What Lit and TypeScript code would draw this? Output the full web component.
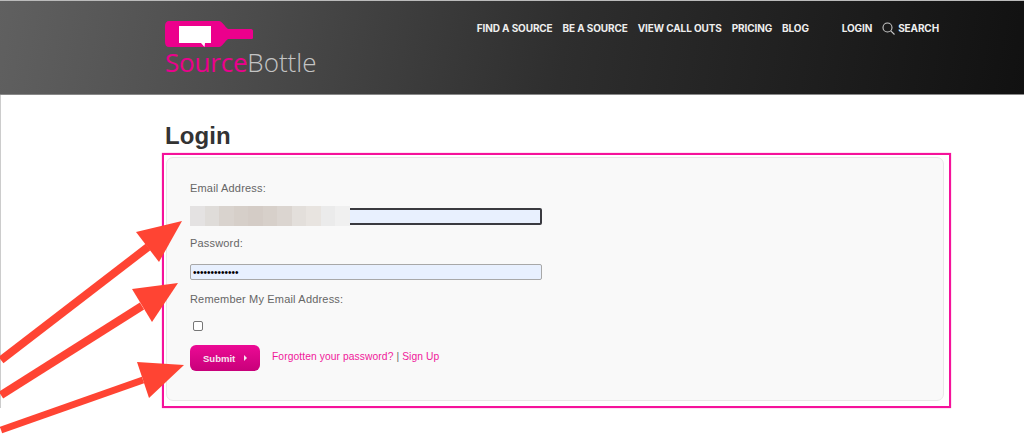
import { LitElement, html, css, svg } from "lit";
import { customElement } from "lit/decorators.js";

const BLUR = ["#e4e2e2","#dfdcd9","#d9d3ce","#d6cfc9","#d4ccc6","#d7d0ca","#dbd5d0","#e3dfdb","#e8e4e0","#ebebeb","#f0f0f0"];

const ARROWS = [
  { x: 1, y: 360, sx: 148, sy: 247, w: 8, head: "182,221 136,232 159,262" },
  { x: 1, y: 395, sx: 142, sy: 306, w: 8, head: "178,283 132,289 152,322" },
  { x: 1, y: 430, sx: 143, sy: 380, w: 7, head: "184,365 137,362 149,398" },
];

@customElement("app-root")
export class AppRoot extends LitElement {
  static styles = css`
    :host { display: block; position: relative; height: 439px; overflow: hidden; background: #fff; font-family: "Liberation Sans", Arial, sans-serif; }
    .header { height: 95px; box-sizing: border-box; border-top: 1px solid #bbb; border-bottom: 1px solid #888; background: linear-gradient(100deg, #606060 0%, #4b4b4b 25%, #2e2e2e 55%, #111 100%); display: flex; padding: 0 85px 0 165px; align-items: flex-start; }
    .logo { display: flex; flex-direction: column; width: 160px; padding-top: 20px; }
    .logo svg { display: block; }
    .wordmark { font-family: "Open Sans", sans-serif; font-weight: 300; font-size: 26px; line-height: 26px; color: #c4c4c4; white-space: nowrap; }
    .wordmark b { font-weight: 500; letter-spacing: -0.2px; color: #ec008c; }
    .nav { flex: 1; display: flex; align-items: center; gap: 10px; padding: 20px 0 0 152px; font-family: Inter, sans-serif; font-weight: 700; font-size: 10px; line-height: 14px; letter-spacing: -0.12px; color: #eee; white-space: nowrap; }
    .nav .login { margin-left: 23px; }
    .nav .search { display: flex; align-items: center; gap: 3px; }
    .nav svg { display: block; }
    .main { padding: 27px 0 0 162px; border-left: 1px solid #ccc; box-sizing: border-box; }
    h1 { margin: 0 0 3px 2px; font-size: 24px; line-height: 28px; font-weight: 700; letter-spacing: 0.1px; color: #333; }
    .frame { box-sizing: border-box; width: 789px; height: 255px; margin-left: -1px; border: 2px solid #f5129b; box-shadow: 0 0 1px rgba(245, 18, 155, 0.7); padding: 2px 5px 5px 2px; }
    .card { box-sizing: border-box; height: 100%; border: 1px solid #e8e8e8; border-radius: 7px; background: #f9f9f9; padding: 23px 0 0 23px; color: #666; font-size: 11px; letter-spacing: 0.18px; }
    .label { line-height: 14px; height: 14px; }
    .field { position: relative; width: 352px; height: 17px; margin: 13px 0 0; }
    .field.pw { height: 16px; margin-top: 14px; }
    .field + .label { margin-top: 11px; }
    .field.pw + .label { margin-top: 12px; }
    input.text { box-sizing: border-box; display: block; width: 352px; height: 100%; margin: 0; padding: 0 2px; background: #e8f0fe; border: 1px solid #a8a8a8; border-radius: 2px; font-size: 10px; color: #000; outline: none; }
    input.focus { border: 2px solid #3a3a40; }
    .blur { position: absolute; left: 0; top: -2px; height: 20px; width: 160px; display: flex; filter: blur(0.6px); }
    .blur span { flex: 1; }
    .check { appearance: none; display: block; box-sizing: border-box; width: 10px; height: 10px; margin: 15px 0 0 3px; background: #fff; border: 1px solid #767676; border-radius: 2px; }
    .actions { display: flex; align-items: center; margin-top: 14px; }
    .submit { display: flex; align-items: center; box-sizing: border-box; width: 70px; height: 26px; padding: 0 0 0 13px; border: 0; border-radius: 6px; background: linear-gradient(#ec0a95, #c8007a); color: #f7e6f1; font-family: inherit; font-size: 9.5px; font-weight: 700; }
    .submit i { width: 0; height: 0; margin-left: 9px; border-left: 3px solid #f7e6f1; border-top: 3px solid transparent; border-bottom: 3px solid transparent; }
    .links { margin-left: 12px; font-size: 10.25px; letter-spacing: 0.1px; color: #666; position: relative; top: -2px; }
    .links a { color: #f0189a; text-decoration: none; }
    .arrows { position: absolute; left: 0; top: 0; pointer-events: none; }
  `;

  render() {
    return html`
      <div class="header">
        <div class="logo">
          <svg width="88" height="28" viewBox="0 0 88 28">
            <path fill="#ec008c" d="M4 0H54C57 0 60 6 63 8H86C87.500 8 88 9 88 10V16.500C88 17.500 87.500 18 86 18H63C60 20 57 26 54 26H4C1.500 26 0 24 0 21V5C0 2 1.500 0 4 0Z"/>
            <path fill="#fff" d="M14 5H46V22H40L39.500 26L36 22H14Z"/>
          </svg>
          <div class="wordmark"><b>Source</b>Bottle</div>
        </div>
        <nav class="nav">
          <span>FIND A SOURCE</span><span>BE A SOURCE</span><span>VIEW CALL OUTS</span><span>PRICING</span><span>BLOG</span>
          <span class="login">LOGIN</span>
          <span class="search">
            <svg width="13" height="13" viewBox="0 0 13 13" fill="none" stroke="#c8c8c8" stroke-width="1.100"><circle cx="5.500" cy="5.500" r="4.500"/><path d="M8.800 8.800L12.500 12.500"/></svg>
            SEARCH
          </span>
        </nav>
      </div>
      <div class="main">
        <h1>Login</h1>
        <div class="frame">
          <div class="card">
            <div class="label">Email Address:</div>
            <div class="field">
              <input class="text focus" type="text" aria-label="Email Address" />
              <div class="blur">${BLUR.map((c) => html`<span style="background:${c}"></span>`)}</div>
            </div>
            <div class="label">Password:</div>
            <div class="field pw"><input class="text" type="password" aria-label="Password" value="aaaaaaaaaaaaa" /></div>
            <div class="label">Remember My Email Address:</div>
            <input class="check" type="checkbox" aria-label="Remember My Email Address" />
            <div class="actions">
              <button class="submit">Submit<i></i></button>
              <span class="links"><a href="#">Forgotten your password?</a> | <a href="#">Sign Up</a></span>
            </div>
          </div>
        </div>
      </div>
      <svg class="arrows" width="1024" height="439" viewBox="0 0 1024 439">
        ${ARROWS.map((a) => svg`<line x1=${a.x} y1=${a.y} x2=${a.sx} y2=${a.sy} stroke="#ff4433" stroke-width=${a.w}/><polygon points=${a.head} fill="#ff4433"/>`)}
      </svg>
    `;
  }
}
